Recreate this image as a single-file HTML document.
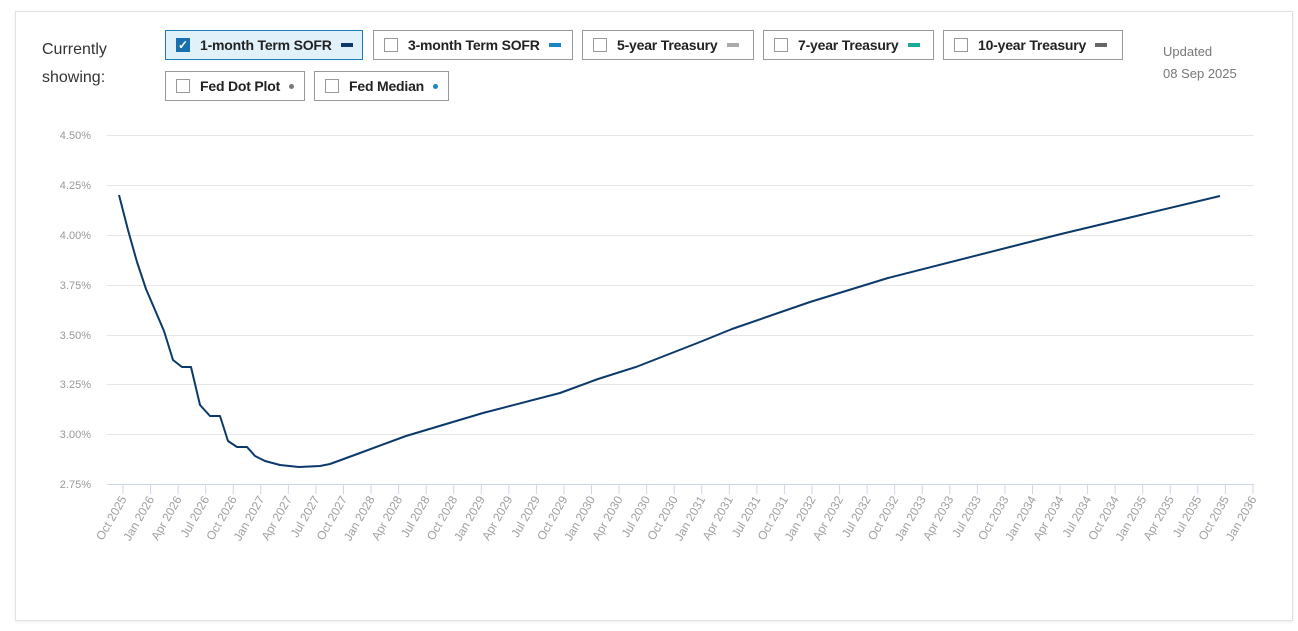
<!DOCTYPE html>
<html><head><meta charset="utf-8"><style>
body{margin:0;background:#fff;font-family:"Liberation Sans",sans-serif;width:1298px;height:631px;overflow:hidden;position:relative}
.card{position:absolute;left:15px;top:11px;width:1276px;height:608px;border:1px solid #e2e2e2;box-shadow:0 1px 3px rgba(0,0,0,.08)}
.lbl{position:absolute;left:42px;top:36px;font-size:16px;line-height:28px;color:#333}
.btn{position:absolute;height:30px;border:1px solid #999;box-sizing:border-box;font-size:14px;font-weight:bold;color:#222;display:flex;align-items:center;padding-left:10px;letter-spacing:-0.2px}
.btn .cb{width:14px;height:14px;border:1px solid #999;box-sizing:border-box;margin-right:10px;background:#fff;letter-spacing:0}
.btn.on{background:#e1f1fa;border-color:#1a7db8}
.btn.on .cb{background:#1a6fb0;border-color:#1a6fb0;color:#fff;font-size:12px;line-height:12px;text-align:center}
.dash{display:inline-block;width:12px;height:4px;margin-left:9px}
.dot{display:inline-block;width:5px;height:5px;border-radius:50%;margin-left:9px}
.upd{position:absolute;left:1163px;top:41px;font-size:13px;color:#777;line-height:22px}
</style></head><body>
<div class="card"></div>
<div class="lbl">Currently<br>showing:</div>
<div class="btn on" style="left:165px;top:30px;width:198px"><span class="cb">✓</span>1-month Term SOFR<span class="dash" style="background:#0b3a6a"></span></div>
<div class="btn" style="left:373px;top:30px;width:200px"><span class="cb"></span>3-month Term SOFR<span class="dash" style="background:#1a86c4"></span></div>
<div class="btn" style="left:582px;top:30px;width:172px"><span class="cb"></span>5-year Treasury<span class="dash" style="background:#aaa"></span></div>
<div class="btn" style="left:763px;top:30px;width:171px"><span class="cb"></span>7-year Treasury<span class="dash" style="background:#1aaa96"></span></div>
<div class="btn" style="left:943px;top:30px;width:180px"><span class="cb"></span>10-year Treasury<span class="dash" style="background:#666"></span></div>
<div class="btn" style="left:165px;top:71px;width:140px"><span class="cb"></span>Fed Dot Plot<span class="dot" style="background:#777"></span></div>
<div class="btn" style="left:314px;top:71px;width:135px"><span class="cb"></span>Fed Median<span class="dot" style="background:#1a86c4"></span></div>
<div class="upd">Updated<br>08 Sep 2025</div>
<svg width="1298" height="631" style="position:absolute;left:0;top:0" font-family="Liberation Sans,sans-serif">
<g stroke="#e6e6e6" stroke-width="1">
<line x1="107" x2="1254" y1="135.5" y2="135.5"/><line x1="107" x2="1254" y1="185.5" y2="185.5"/><line x1="107" x2="1254" y1="235.5" y2="235.5"/><line x1="107" x2="1254" y1="285.5" y2="285.5"/><line x1="107" x2="1254" y1="335.5" y2="335.5"/><line x1="107" x2="1254" y1="384.5" y2="384.5"/><line x1="107" x2="1254" y1="434.5" y2="434.5"/>
</g>
<line x1="107" x2="1254" y1="484.5" y2="484.5" stroke="#ccd6eb"/>
<g font-size="11" fill="#999" text-anchor="end">
<text x="91" y="139">4.50%</text><text x="91" y="189">4.25%</text><text x="91" y="239">4.00%</text><text x="91" y="289">3.75%</text><text x="91" y="339">3.50%</text><text x="91" y="388">3.25%</text><text x="91" y="438">3.00%</text><text x="91" y="488">2.75%</text>
</g>
<g id="ticks" stroke="#ccd6eb"></g>
<g id="xl" font-size="12" fill="#a0a0a0" text-anchor="end"></g>
<path fill="none" stroke="#0b3a6a" stroke-width="2" stroke-linejoin="round" d="M119,195 L128,230 L137,262 L146,289 L155,310 L164,331 L173,360 L182,367 L191,367 L200,405 L210,416 L220,416 L228,441 L237,447 L247,447 L255,456 L265,461 L280,465 L299,467 L320,466 L330,464 L360,453 L406,436 L483,413 L560,393 L598,379 L636,367 L700,342 L732,329 L810,302 L888,278 L1061,234 L1220,196"/>
</svg>
<script>
var m=["Oct","Jan","Apr","Jul"],t=document.getElementById("ticks"),l=document.getElementById("xl"),s="",u="";
for(var i=0;i<=41;i++){var x=123+i*27.56;var yr=2025+Math.floor((i+3)/4);var mo=m[i%4];
s+='<line x1="'+x+'" x2="'+x+'" y1="484" y2="494"/>';
u+='<text transform="translate('+(x+4)+',499) rotate(-60)">'+mo+' '+yr+'</text>';}
t.innerHTML=s;l.innerHTML=u;
</script>
</body></html>
